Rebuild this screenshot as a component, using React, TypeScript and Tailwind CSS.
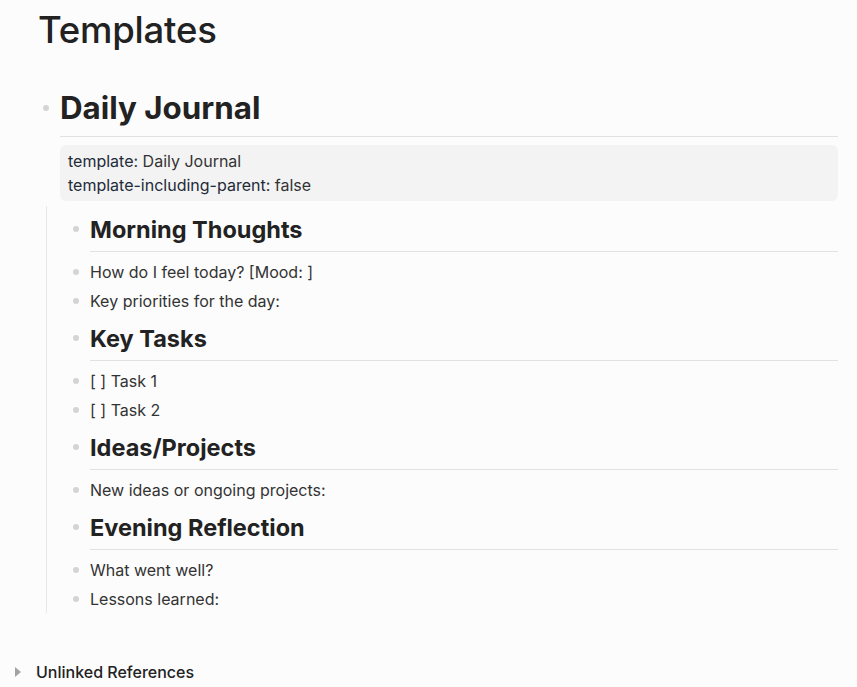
const font = { fontFamily: "Inter, 'Noto Sans', sans-serif" };

type Block = { kind: "h" | "li"; text: string };

const children: Block[] = [
  { kind: "h", text: "Morning Thoughts" },
  { kind: "li", text: "How do I feel today? [Mood: ]" },
  { kind: "li", text: "Key priorities for the day:" },
  { kind: "h", text: "Key Tasks" },
  { kind: "li", text: "[ ] Task 1" },
  { kind: "li", text: "[ ] Task 2" },
  { kind: "h", text: "Ideas/Projects" },
  { kind: "li", text: "New ideas or ongoing projects:" },
  { kind: "h", text: "Evening Reflection" },
  { kind: "li", text: "What went well?" },
  { kind: "li", text: "Lessons learned:" },
];

const Dot = () => <span className="block h-[6px] w-[6px] rounded-full bg-[#d4d4d4]" />;

const ChildBlock = ({ block }: { block: Block }) => {
  if (block.kind === "h") {
    return (
      <div className="flex pt-[8px] mb-[5px]">
        <div className="flex h-[30px] w-[16px] shrink-0 items-center justify-center">
          <Dot />
        </div>
        <div className="ml-[6px] flex-1 border-b border-[#e2e2e2] pb-[5px]">
          <h2 className="text-[23.5px] font-bold leading-[32px] text-[#222]">{block.text}</h2>
        </div>
      </div>
    );
  }
  return (
    <div className="flex h-[29px] items-center">
      <div className="flex w-[16px] shrink-0 items-center justify-center">
        <Dot />
      </div>
      <div className="ml-[6px] text-[16px] leading-[24px] text-[#333]">{block.text}</div>
    </div>
  );
};

export default function App() {
  return (
    <div className="min-h-screen bg-[#fcfcfc] text-[#333]" style={font}>
      <div className="pl-[38px] pr-[19px] pt-[8px]">
        <h1 className="text-[36.5px] font-medium leading-[44px] text-[#222] tracking-[-0.2px]">Templates</h1>

        <div className="mt-[36px]">
          <div className="flex">
            <div className="flex h-[40px] w-[16px] shrink-0 items-center justify-center">
              <Dot />
            </div>
            <div className="ml-[6px] flex-1">
              <div className="border-b border-[#e2e2e2] pb-[8px]">
                <div className="text-[31.3px] font-bold leading-[40px] text-[#222]">Daily Journal</div>
              </div>
              <div className="mt-[8px] rounded-md bg-[#f3f3f3] px-[8px] py-[4px] text-[16px] leading-[24px]">
                <div>
                  <span className="text-[#222b3a]">template</span>
                  <span className="text-[#333]">: Daily Journal</span>
                </div>
                <div>
                  <span className="text-[#222b3a]">template-including-parent</span>
                  <span className="text-[#333]">: false</span>
                </div>
              </div>
            </div>
          </div>

          <div className="ml-[8px] mt-[5px] border-l border-[#e8e8e8] pl-[21px]">
            {children.map((b, i) => (
              <ChildBlock key={i} block={b} />
            ))}
          </div>
        </div>
      </div>

      <div className="mt-[47px] flex items-center pl-[15px]">
        <svg width="6" height="10" viewBox="0 0 6 10" className="shrink-0">
          <path d="M0 0 L6 5 L0 10 Z" fill="#a3a3a3" />
        </svg>
        <span className="ml-[15px] text-[16px] font-medium leading-[24px] text-[#222]">Unlinked References</span>
      </div>
    </div>
  );
}
